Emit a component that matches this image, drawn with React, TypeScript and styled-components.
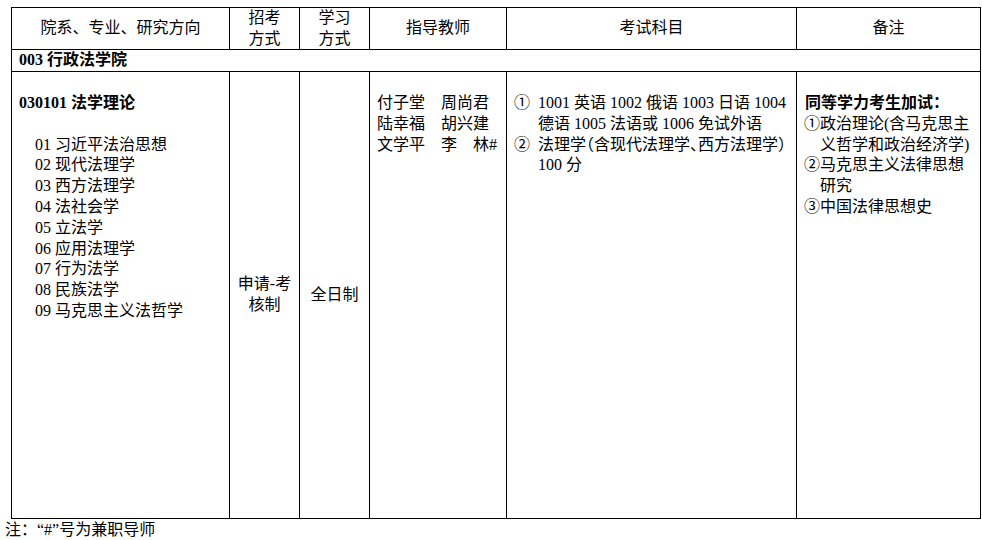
import styled, { createGlobalStyle } from 'styled-components'

const GlobalStyle = createGlobalStyle`
  html, body {
    margin: 0;
    padding: 0;
    background: #fff;
  }
  body {
    font-family: "Liberation Serif", "Noto Sans CJK SC", serif;
    color: #000;
  }
`

const Page = styled.div`
  padding-top: 7px;
  width: 982px;
`

const Table = styled.table`
  margin-left: 11px;
  width: 970px;
  border-collapse: collapse;
  table-layout: fixed;
  font-size: 16px;
  line-height: 20.8px;
`

const HeadRow = styled.tr`
  height: 42px;
`

const SectionRow = styled.tr`
  height: 22px;
`

const BodyRow = styled.tr`
  height: 447px;
`

const HeadCell = styled.th`
  border: 1px solid #000;
  padding: 0;
  font-family: "Liberation Sans", "Noto Sans CJK SC", sans-serif;
  font-size: 16px;
  font-weight: normal;
  line-height: 20.5px;
  text-align: center;
  vertical-align: middle;
`

const SectionCell = styled.td`
  border: 1px solid #000;
  padding: 0 7px;
  font-weight: bold;
  vertical-align: middle;
`

const BodyCell = styled.td<{ $center?: boolean }>`
  border: 1px solid #000;
  padding: ${(p) => (p.$center ? '0' : '21px 7px 0')};
  text-align: ${(p) => (p.$center ? 'center' : 'left')};
  vertical-align: ${(p) => (p.$center ? 'middle' : 'top')};
`

const Major = styled.div`
  font-weight: bold;
  margin-bottom: 20.8px;
`

const Directions = styled.div`
  padding-left: 16px;
`

const Teachers = styled.div`
  white-space: pre;
`

const ExamItem = styled.div`
  display: flex;
  white-space: nowrap;
`

const Marker = styled.span`
  flex: 0 0 24px;
`

const Compact = styled.span`
  font-feature-settings: "halt";
`

const NoteTitle = styled.div`
  font-weight: bold;
  padding-left: 1px;
`

const NoteItem = styled.div`
  padding-left: 16px;
  text-indent: -16px;
  white-space: nowrap;
`

const Footnote = styled.div`
  padding-left: 5px;
  font-size: 16px;
  line-height: 21px;
`

const directions = [
  '01 习近平法治思想',
  '02 现代法理学',
  '03 西方法理学',
  '04 法社会学',
  '05 立法学',
  '06 应用法理学',
  '07 行为法学',
  '08 民族法学',
  '09 马克思主义法哲学',
]

export default function App() {
  return (
    <Page>
      <GlobalStyle />
      <Table>
        <colgroup>
          <col style={{ width: 218 }} />
          <col style={{ width: 70 }} />
          <col style={{ width: 70 }} />
          <col style={{ width: 137 }} />
          <col style={{ width: 290 }} />
          <col style={{ width: 184 }} />
        </colgroup>
        <thead>
          <HeadRow>
            <HeadCell>院系、专业、研究方向</HeadCell>
            <HeadCell>
              招考
              <br />
              方式
            </HeadCell>
            <HeadCell>
              学习
              <br />
              方式
            </HeadCell>
            <HeadCell>指导教师</HeadCell>
            <HeadCell>考试科目</HeadCell>
            <HeadCell>备注</HeadCell>
          </HeadRow>
        </thead>
        <tbody>
          <SectionRow>
            <SectionCell colSpan={6}>003 行政法学院</SectionCell>
          </SectionRow>
          <BodyRow>
            <BodyCell>
              <Major>030101 法学理论</Major>
              <Directions>
                {directions.map((d) => (
                  <div key={d}>{d}</div>
                ))}
              </Directions>
            </BodyCell>
            <BodyCell $center>
              申请-考
              <br />
              核制
            </BodyCell>
            <BodyCell $center>全日制</BodyCell>
            <BodyCell>
              <Teachers>
                {'付子堂　周尚君\n陆幸福　胡兴建\n文学平　李　林#'}
              </Teachers>
            </BodyCell>
            <BodyCell>
              <ExamItem>
                <Marker>①</Marker>
                <span>
                  1001 英语 1002 俄语 1003 日语 1004
                  <br />
                  德语 1005 法语或 1006 免试外语
                </span>
              </ExamItem>
              <ExamItem>
                <Marker>②</Marker>
                <span>
                  <Compact>法理学（含现代法理学、西方法理学）</Compact>
                  <br />
                  100 分
                </span>
              </ExamItem>
            </BodyCell>
            <BodyCell>
              <NoteTitle>同等学力考生加试：</NoteTitle>
              <NoteItem>
                ①政治理论(含马克思主
                <br />
                义哲学和政治经济学)
              </NoteItem>
              <NoteItem>
                ②马克思主义法律思想
                <br />
                研究
              </NoteItem>
              <NoteItem>③中国法律思想史</NoteItem>
            </BodyCell>
          </BodyRow>
        </tbody>
      </Table>
      <Footnote>注：“#”号为兼职导师</Footnote>
    </Page>
  )
}
